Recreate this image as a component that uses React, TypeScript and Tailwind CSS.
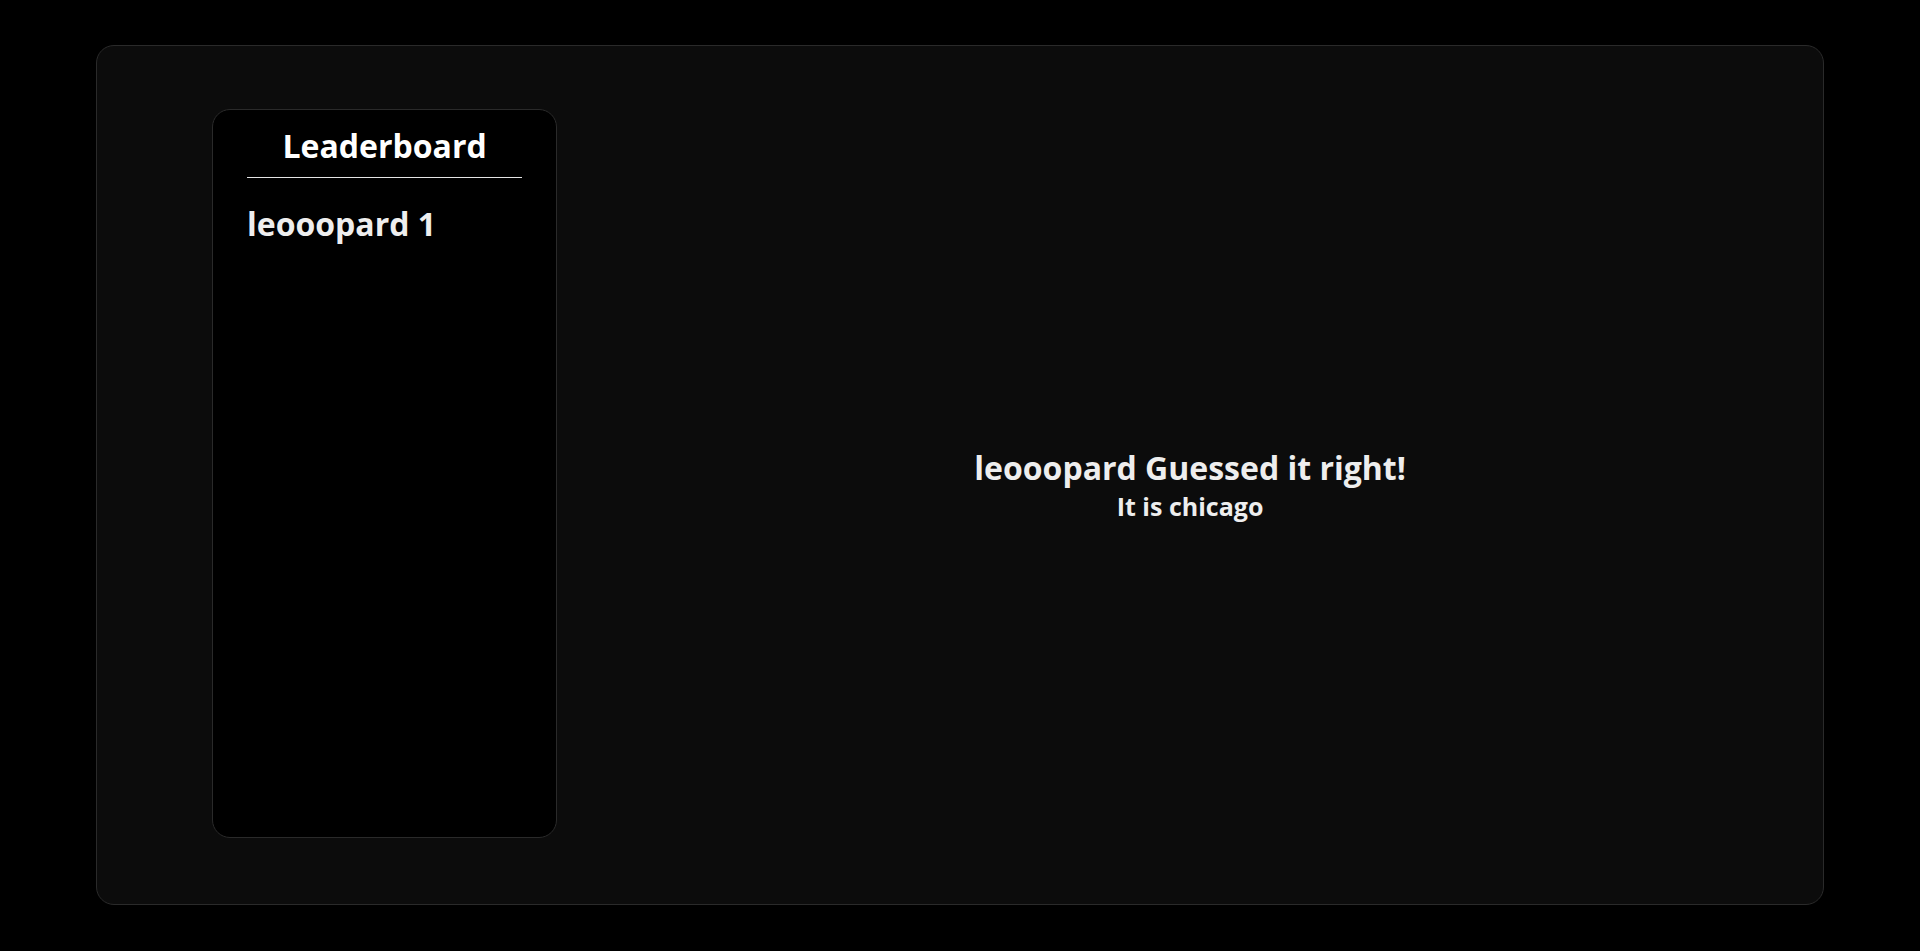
import { useState } from 'react';

function App() {
  const [players] = useState([{ name: "leooopard", score: 1 }]);
  const winner = "leooopard";
  const answer = "chicago";

  return (
    <div className="min-h-screen bg-black pt-[45px] font-['Open_Sans',sans-serif]">
      <div className="mx-auto w-[90%] h-[860px] rounded-[18px] border border-[#2a2a2a] bg-[#0c0c0c] flex">
        <div className="ml-[115px] mt-[63px] w-[20%] h-[729px] rounded-[18px] border border-[#2a2a2a] bg-black px-[34px] pt-[16px]">
          <h1 className="text-center text-[32px] font-bold text-white leading-[40px]">Leaderboard</h1>
          <div className="mt-[11px] h-px bg-[#e5e5e5]"></div>
          <ul className="mt-[26px]">
            {players.map((p) => (
              <li key={p.name} className="text-[32px] font-bold text-[#eeeeee] leading-[40px]">
                {p.name} {p.score}
              </li>
            ))}
          </ul>
        </div>
        <div className="flex-1 flex flex-col items-center justify-center pt-[22px]">
          <h2 className="text-[32px] font-bold text-[#eeeeee] leading-[40px]">{winner} Guessed it right!</h2>
          <h3 className="text-[25px] font-bold text-[#eeeeee] leading-[36px]">It is {answer}</h3>
        </div>
      </div>
    </div>
  );
}

export default App
